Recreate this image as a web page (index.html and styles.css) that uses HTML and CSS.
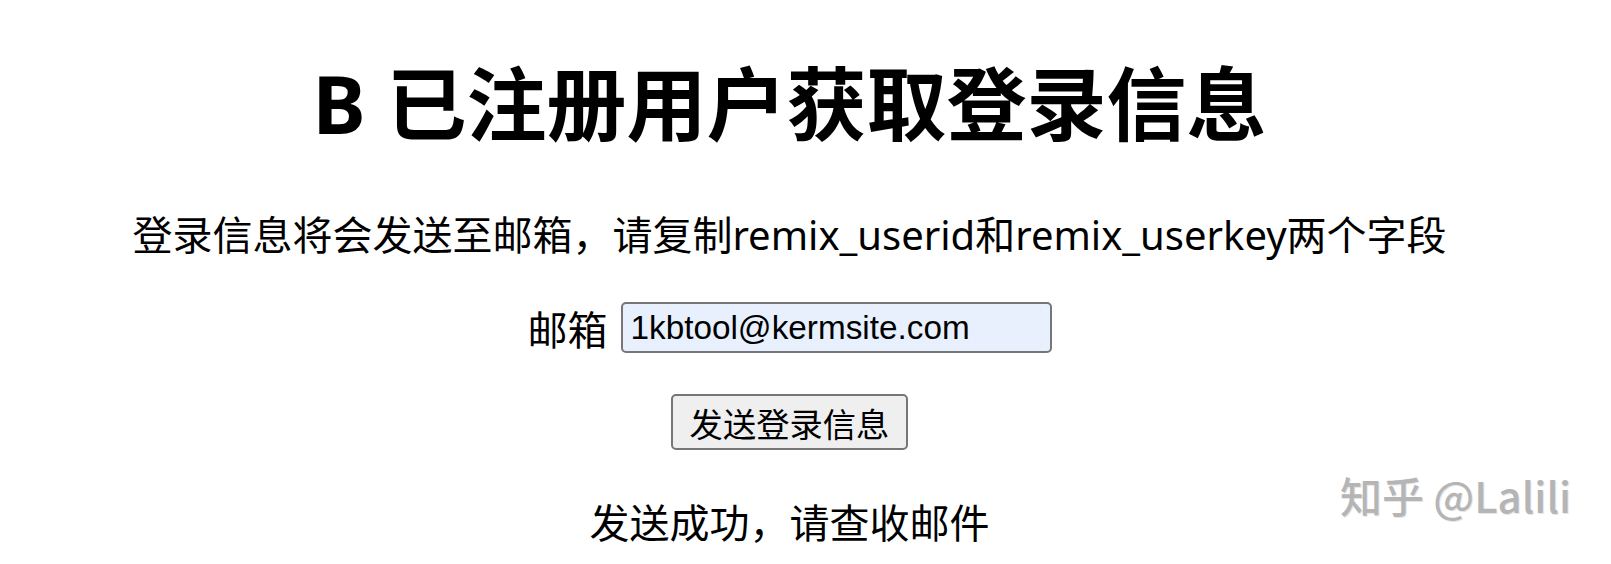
FILE: index.html
```html
<!DOCTYPE html>
<html lang="zh-CN">
  <head>
    <meta charset="UTF-8" />
    <meta name="viewport" content="width=device-width, initial-scale=1.0" />
    <title>已注册用户获取登录信息</title>
    <link rel="stylesheet" href="styles.css">
  </head>
  <body>
    <h1>B 已注册用户获取登录信息</h1>
    <p class="intro">登录信息将会发送至邮箱，请复制remix_userid和remix_userkey两个字段</p>
    <form class="mail-form">
      <div class="row">
        <label for="email">邮箱</label>
        <input type="text" id="email" name="email" value="1kbtool@kermsite.com">
      </div>
      <div class="row">
        <button type="button">发送登录信息</button>
      </div>
    </form>
    <p class="result">发送成功，请查收邮件</p>

    <div class="watermark">知乎 @Lalili</div>
  </body>
</html>
```

FILE: styles.css
```css
* {
  box-sizing: border-box;
}
body {
  margin: 0;
  padding: 0 32px 0 0;
  color: #000;
  background: #fff;
  font-family: "Noto Sans", "Noto Sans CJK SC", sans-serif;
}
h1 {
  margin: 50px 0 52px;
  font-size: 80px;
  line-height: 106px;
  font-weight: 700;
  text-align: center;
}
p {
  margin: 0;
  font-size: 40px;
  line-height: 53px;
  text-align: center;
}
.intro {
  margin-bottom: 40px;
}
.mail-form .row {
  display: flex;
  justify-content: center;
  align-items: center;
  gap: 13px;
  margin-bottom: 40px;
}
.mail-form .row:first-child {
  height: 53px;
}
.mail-form label {
  font-size: 40px;
  font-family: "Noto Sans CJK SC", sans-serif;
}
.mail-form input {
  width: 431px;
  height: 51px;
  padding: 0 8px;
  border: 2px solid #767676;
  border-radius: 5px;
  background: #e8f0fe;
  font-family: "Liberation Sans", Arial, sans-serif;
  font-size: 33.3px;
  color: #000;
}
.mail-form .row:last-child {
  margin-bottom: 45px;
}
.mail-form button {
  height: 56px;
  padding: 0 17px;
  border: 2px solid #767676;
  border-radius: 5px;
  background: #efefef;
  font-family: "Noto Sans CJK SC", sans-serif;
  font-size: 33.3px;
  color: #000;
}
.result {
  font-family: "Noto Sans CJK SC", sans-serif;
}
.watermark {
  position: absolute;
  top: 470px;
  right: 40px;
  font-family: "Noto Sans CJK SC", sans-serif;
  font-size: 42px;
  font-weight: 500;
  line-height: 50px;
  color: #b5b5b5;
  text-shadow: 1px 1px 0 #e6e6e6;
}
```
